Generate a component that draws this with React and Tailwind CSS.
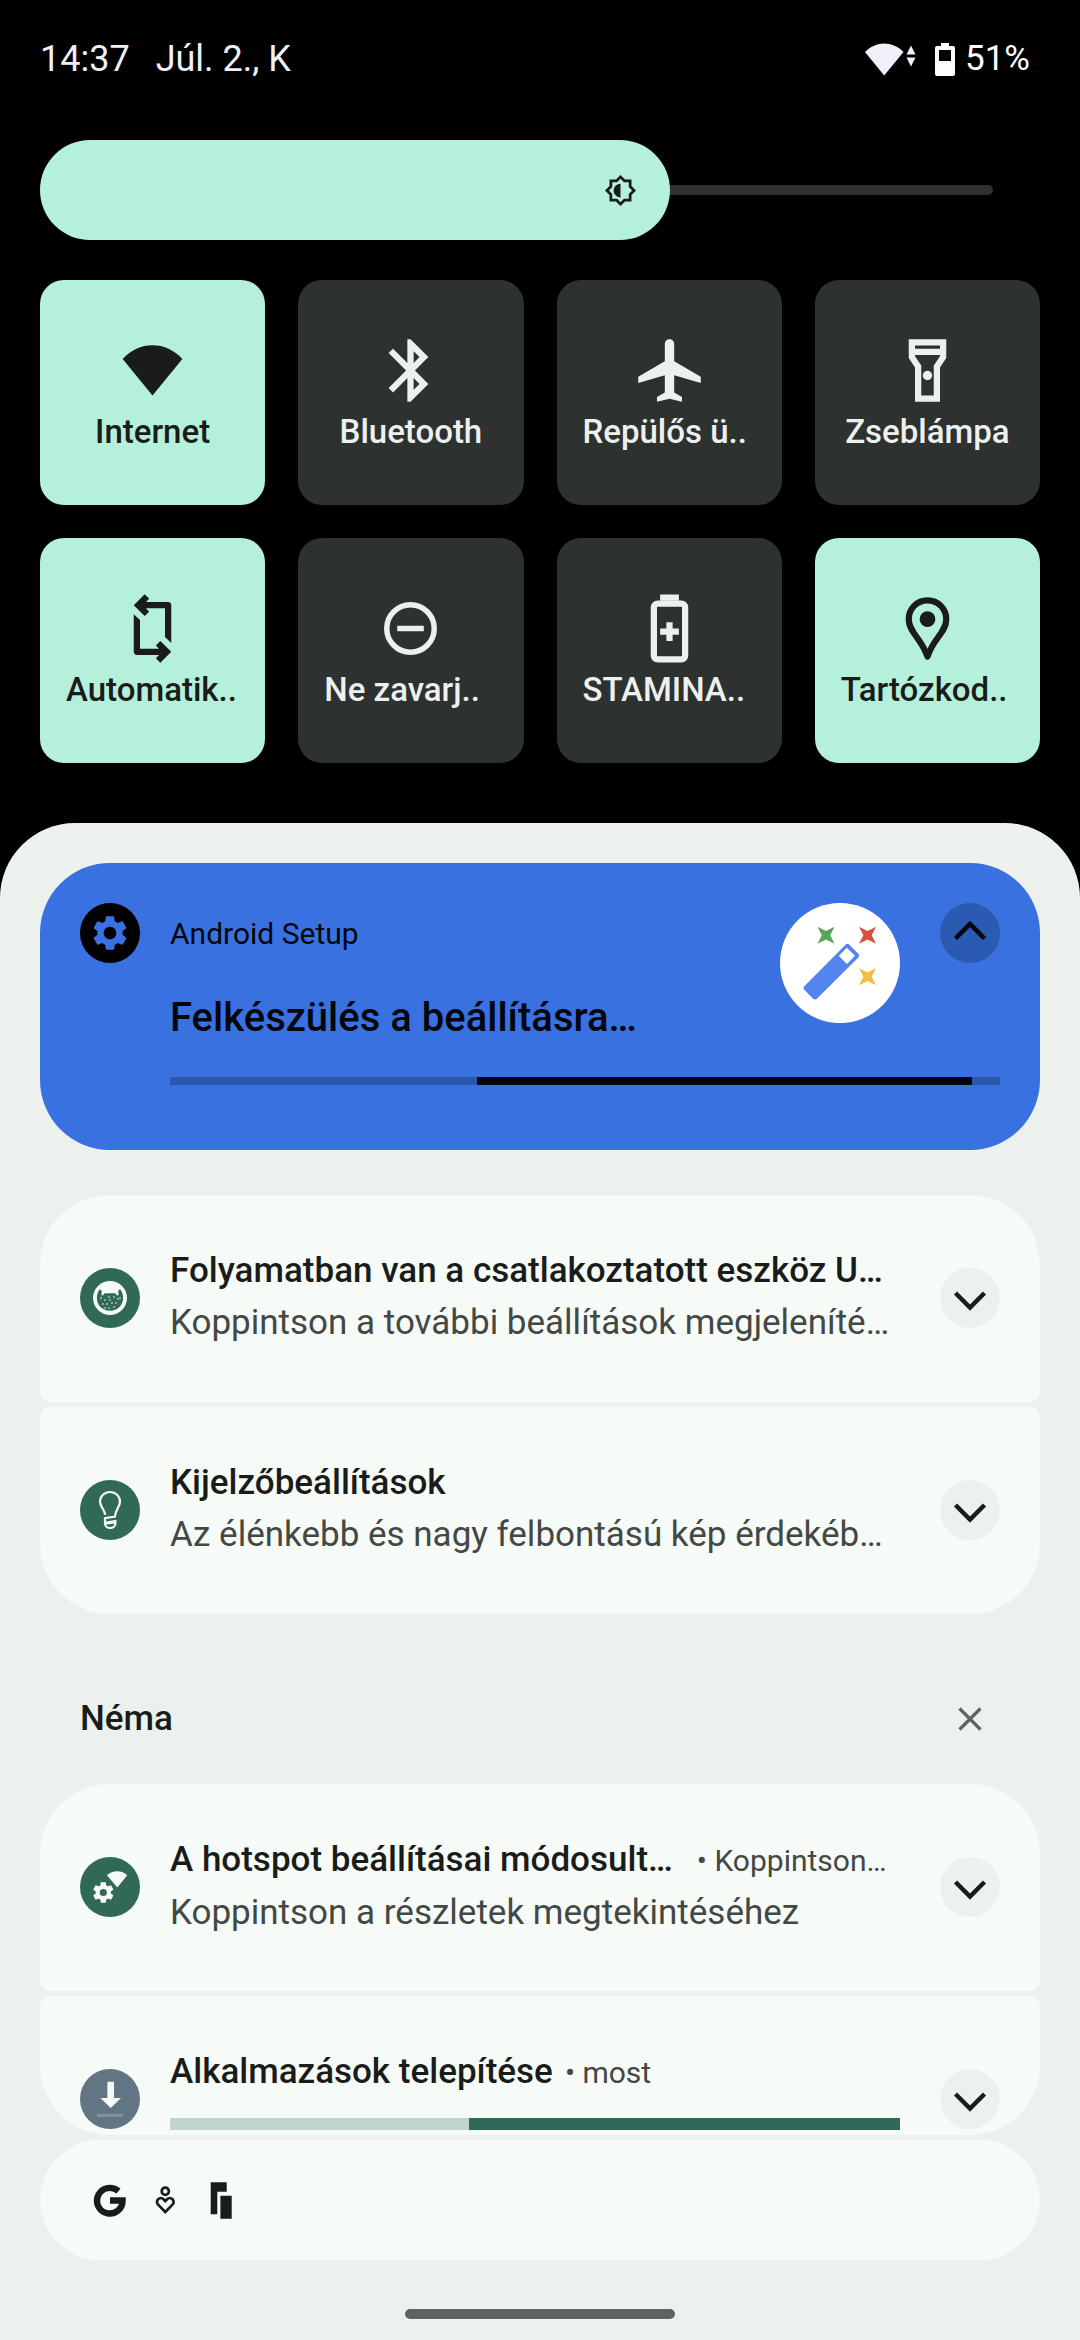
import { useState } from 'react';
import { MdSettings, MdBluetooth, MdAirplanemodeActive } from 'react-icons/md';
import clsx from 'clsx';

const WifiIcon = (props) => (
  <svg viewBox="0 0 24 24" fill="currentColor" {...props}>
    <path d="M12 20L2.45 8.3C5.1 5.4 8.4 3.9 12 3.9s6.9 1.5 9.55 4.4z" />
  </svg>
);

const FlashlightIcon = (props) => (
  <svg viewBox="0 0 24 24" fill="currentColor" {...props}>
    <path fillRule="evenodd" d="M18 2H6v6l2 3v11h8V11l2-3V2zM16 4v1H8V4h8zM14 10.4V20h-4v-9.6L8 7.4V7h8v.4l-2 3z" />
    <circle cx="12" cy="13.6" r="1.5" />
  </svg>
);

const RotateIcon = (props) => (
  <svg viewBox="0 0 24 24" fill="currentColor" {...props}>
    <path d="M6 4.55L9.5 1.05l1.45 1.45L9.9 3.55h7a1.1 1.1 0 0 1 1.1 1.1V16.6l-2-1.9V5.55H9.9l1.05 1.05L9.5 8z" />
    <path transform="rotate(180 12 12)" d="M6 4.55L9.5 1.05l1.45 1.45L9.9 3.55h7a1.1 1.1 0 0 1 1.1 1.1V16.6l-2-1.9V5.55H9.9l1.05 1.05L9.5 8z" />
  </svg>
);

const DndIcon = (props) => (
  <svg viewBox="0 0 24 24" fill="none" stroke="currentColor" strokeWidth="1.75" {...props}>
    <circle cx="12" cy="12" r="7.6" />
    <path d="M7.75 12h8.5" />
  </svg>
);

const StaminaIcon = (props) => (
  <svg viewBox="0 0 24 24" fill="none" stroke="currentColor" strokeWidth="2" {...props}>
    <rect x="7" y="4" width="10" height="17.9" rx="1.2" />
    <path d="M9 2.1h6M9 13h6M12 10v6" />
  </svg>
);

const LocationIcon = (props) => (
  <svg viewBox="0 0 24 24" fill="none" stroke="currentColor" strokeWidth="2" strokeLinejoin="round" {...props}>
    <path d="M12 3C8.6 3 6 5.7 6 9c0 2.2 1.1 3.8 2.6 5.8C10 16.7 11.2 18.6 12 21c.8-2.4 2-4.3 3.4-6.2C16.9 12.8 18 11.2 18 9c0-3.3-2.6-6-6-6z" />
    <circle cx="12" cy="9" r="2.5" fill="currentColor" stroke="none" />
  </svg>
);

const BrightnessIcon = (props) => (
  <svg viewBox="0 0 24 24" fill="currentColor" {...props}>
    <path
      fillRule="evenodd"
      d="M20 8.69V4h-4.69L12 .69 8.69 4H4v4.69L.69 12 4 15.31V20h4.69L12 23.31 15.31 20H20v-4.69L23.31 12 20 8.69zM18 14.48V18h-3.52L12 20.48 9.52 18H6v-3.52L3.52 12 6 9.52V6h3.52L12 3.52 14.48 6H18v3.52L20.48 12 18 14.48z"
    />
    <path d="M12 7v10c-2.76 0-5-2.24-5-5s2.24-5 5-5z" />
  </svg>
);

const BatteryIcon = (props) => (
  <svg viewBox="0 0 20 33" fill="currentColor" {...props}>
    <path fillRule="evenodd" d="M6 0h8v3h4a2 2 0 0 1 2 2v26a2 2 0 0 1-2 2H2a2 2 0 0 1-2-2V5a2 2 0 0 1 2-2h4zM4 7v11h12V7z" />
  </svg>
);

const Chevron = ({ up }) => (
  <svg viewBox="0 0 60 60" className="size-15" fill="none" stroke="currentColor" strokeWidth="4.5">
    <path d={up ? 'M15.5 35.5L30 21l14.5 14.5' : 'M15.5 25L30 39.5 44.5 25'} />
  </svg>
);

// Seed positions on the melon slice of the USB icon
const SEEDS = [[-9, 0], [-5, 2], [-1, -1], [4, -1], [8, 1], [-7, 6], [-3, 6], [2, 5], [6, 5], [10, 0], [-1, 10], [4, 9], [-5, 10], [0, 2]];

const MelonIcon = () => (
  <svg viewBox="-30 -30 60 60" className="size-15">
    <circle r="17" fill="#f6fbf8" />
    <path
      fill="#306957"
      d="M-10.5-8.3C-14-3.5-14 3-10.5 8-5.5 14.3 5.5 14.3 10.5 8 14 3 14-3.5 10.5-8.3 9-9 7.6-7.6 8.6-3.4 8 -2 6.5-2 6-4.4 2-5-2-5-6-4.4-6.5-2-8-2-8.6-3.4-7.6-7.6-9-9-10.5-8.3z"
    />
    {SEEDS.map(([x, y], i) => (
      <circle key={i} cx={x} cy={y} r="0.8" fill="#f6fbf8" />
    ))}
  </svg>
);

const BulbIcon = () => (
  <svg viewBox="-30 -30 60 60" className="size-15" fill="none" stroke="#f6fbf8" strokeWidth="2.2">
    <path d="M-4.8 4.8C-5.3-.5-10-3-10-8.4a10 9.6 0 0 1 20 0C10-3 5.3-.5 5 6.5L-5 8.2v4.6L5.4 11v2.2a5.2 4.8 0 0 1-10.4 0" />
    <path d="M-5 13.6L5 13" strokeWidth="1.6" />
  </svg>
);

const HotspotIcon = () => (
  <svg viewBox="-30 -30 60 60" className="size-15" fill="#f6fbf8">
    <path d="M7.3.4L-3-11.8C2.5-17 12-17 17.2-11.8z" />
    <g transform="translate(-6.7 5.5)">
      <circle r="5.6" fill="none" stroke="#f6fbf8" strokeWidth="4" />
      {[0, 60, 120].map((a) => (
        <path key={a} transform={`rotate(${a})`} d="M-2.4-10.3h4.8l.8 4h-6.4zM-2.4 10.3h4.8l.8-4h-6.4z" />
      ))}
    </g>
  </svg>
);

const DownloadIcon = () => (
  <svg viewBox="-30 -30 60 60" className="size-15" fill="#f6fbf8">
    <path d="M-2.6-17.3h6.6v16.3h7L.7 9-9.6-1h7z" />
    <path d="M-13 14.7h26V18h-26z" fill="#80919b" />
  </svg>
);

const STAR = 'M-8.5-8.5L0-4.2 8.5-8.5 4.2 0 8.5 8.5 0 4.2-8.5 8.5-4.2 0z';

const MagicWand = () => (
  <svg viewBox="0 0 120 120" className="size-30 shrink-0">
    <circle cx="60" cy="60" r="60" fill="#fff" />
    <path d={STAR} transform="translate(46 32.3)" fill="#57a55a" />
    <path d={STAR} transform="translate(87.5 32.3)" fill="#d8503f" />
    <path d={STAR} transform="translate(87.5 73.7)" fill="#f2bd42" />
    <path d="M67.4 44L76 52.6 35 93.4 26.7 85z" fill="#5484ed" stroke="#5484ed" strokeWidth="6" strokeLinejoin="round" />
    <path d="M66.9 44.7l8.1 8.1-8.1 8.1-8.1-8.1z" fill="#fff" />
  </svg>
);

const TILES = [
  { label: 'Internet', icon: WifiIcon, on: true },
  { label: 'Bluetooth', icon: MdBluetooth },
  { label: 'Repülős ü..', icon: MdAirplanemodeActive, cut: true },
  { label: 'Zseblámpa', icon: FlashlightIcon },
  { label: 'Automatik..', icon: RotateIcon, on: true, cut: true },
  { label: 'Ne zavarj..', icon: DndIcon, cut: true },
  { label: 'STAMINA..', icon: StaminaIcon, cut: true },
  { label: 'Tartózkod..', icon: LocationIcon, on: true, cut: true },
];

function Tile({ label, icon: Icon, on, cut }) {
  return (
    <button
      aria-pressed={!!on}
      className={clsx(
        'flex h-[225px] flex-col items-center justify-center gap-1 rounded-3xl px-[26px]',
        on ? 'bg-[#b5f0db] text-[#1a1c1a]' : 'bg-[#2d3230] text-[#edf1ee]'
      )}
    >
      <Icon className="size-[75px]" />
      <span className={clsx('w-full whitespace-nowrap text-[33px] leading-10 font-medium', cut ? 'text-left' : 'text-center')}>
        {label}
      </span>
    </button>
  );
}

function Notification({ icon, iconBg = 'bg-[#306957]', title, meta, metaGap = 'ml-3', body, className, children }) {
  return (
    <article className={clsx('flex items-start overflow-hidden bg-[#f6fbf8] px-10', className)}>
      <div className={clsx('mt-[73px] size-15 shrink-0 rounded-full', iconBg)}>{icon}</div>
      <div className="mt-[50px] ml-[30px] min-w-0 flex-1 whitespace-nowrap text-[35px] leading-[52px]">
        <div className="flex items-baseline">
          <h3 className="font-medium text-[#1a1c1a]">{title}</h3>
          {meta && <span className={clsx('text-[30px] text-[#434845]', metaGap)}>• {meta}</span>}
        </div>
        {body && <p className="text-[#434845]">{body}</p>}
        {children}
      </div>
      <button aria-label="Kibontás" className="mt-[73px] ml-10 size-15 shrink-0 rounded-full bg-[#ecf1ee] text-[#1a1c1a]">
        <Chevron />
      </button>
    </article>
  );
}

export default function App() {
  const [brightness, setBrightness] = useState(63);

  return (
    <div className="flex min-h-screen flex-col bg-black font-['Roboto',sans-serif]">
      <header className="flex h-[118px] items-center justify-between pr-[50px] pl-10 text-[#f1eff7]">
        <div className="flex gap-[26px] text-[36px]">
          <span>14:37</span>
          <span>Júl. 2., K</span>
        </div>
        <div className="flex items-center text-[35px]">
          <svg viewBox="0 0 52 33" className="h-[33px] w-[52px]" fill="currentColor">
            <path d="M19.2 32.5L0 9C11-2.5 27.5-2.5 38.5 9z" />
            <path d="M46 2.5l4.5 9h-9zM46 23.5l4.5-9h-9z" />
          </svg>
          <BatteryIcon className="ml-[18px] h-[33px] w-5 text-white" />
          <span className="ml-2.5 text-white">51%</span>
        </div>
      </header>

      <section className="relative mx-10 mt-[22px] flex h-25 items-center">
        <div
          className="flex h-full items-center justify-end rounded-full bg-[#b5f0db] pr-[33px] text-[#1a1c1a]"
          style={{ width: `${brightness}%` }}
        >
          <BrightnessIcon className="size-[33px]" />
        </div>
        <div className="mr-[47px] h-2.5 flex-1 rounded-r-full bg-[#2d3230]" />
        <input
          type="range"
          aria-label="Fényerő"
          value={brightness}
          onChange={(e) => setBrightness(Number(e.target.value))}
          className="absolute inset-0 size-full opacity-0"
        />
      </section>

      <section className="mx-10 mt-10 grid grid-cols-4 gap-[33px]">
        {TILES.map((t) => (
          <Tile key={t.label} {...t} />
        ))}
      </section>

      <main className="mt-[60px] flex flex-1 flex-col rounded-t-[75px] bg-[#ecf1ee] px-10 pt-10">
        <article className="flex h-[287px] flex-col rounded-[70px] bg-[#3971e1] px-10 pt-10 text-[#03060b]">
          <div className="flex items-start">
            <div className="flex size-15 shrink-0 items-center justify-center rounded-full bg-black text-[#3971e1]">
              <MdSettings size={42} />
            </div>
            <div className="ml-[30px] flex-1 whitespace-nowrap">
              <p className="text-[30px] leading-[62px]">Android Setup</p>
              <h2 className="mt-6 text-[40px] leading-[58px] font-medium">Felkészülés a beállításra…</h2>
            </div>
            <MagicWand />
            <button aria-label="Összecsukás" className="ml-10 size-15 shrink-0 rounded-full bg-[#2b5ab2]">
              <Chevron up />
            </button>
          </div>
          <div className="mt-[30px] ml-[90px] flex h-2 bg-[#2a58ac]">
            <div className="ml-[37%] w-[59.6%] bg-[#03060b]" />
          </div>
        </article>

        <section className="mt-[45px] flex flex-col gap-[5px]">
          <Notification
            className="h-[207px] rounded-t-[70px] rounded-b-[10px]"
            icon={<MelonIcon />}
            title="Folyamatban van a csatlakoztatott eszköz U…"
            body="Koppintson a további beállítások megjeleníté…"
          />
          <Notification
            className="h-[207px] rounded-t-[10px] rounded-b-[70px]"
            icon={<BulbIcon />}
            title="Kijelzőbeállítások"
            body="Az élénkebb és nagy felbontású kép érdekéb…"
          />
        </section>

        <div className="mt-10 flex h-[130px] items-center justify-between px-10">
          <h2 className="text-[35px] font-medium text-[#1a1c1a]">Néma</h2>
          <button aria-label="Némák törlése" className="size-15 text-[#5f6368]">
            <svg viewBox="0 0 60 60" className="size-15" fill="none" stroke="currentColor" strokeWidth="3.2">
              <path d="M19.5 19.5l21 21M40.5 19.5l-21 21" />
            </svg>
          </button>
        </div>

        <section className="flex flex-col gap-[5px]">
          <Notification
            className="h-[207px] rounded-t-[70px] rounded-b-[10px]"
            icon={<HotspotIcon />}
            title="A hotspot beállításai módosult…"
            meta="Koppintson…"
            metaGap="ml-6"
            body="Koppintson a részletek megtekintéséhez"
          />
          <Notification
            className="h-[139px] rounded-t-[10px] rounded-b-[70px]"
            icon={<DownloadIcon />}
            iconBg="bg-[#617682]"
            title="Alkalmazások telepítése"
            meta="most"
          >
            <div className="mt-[19px] flex h-3 justify-end bg-[#c1d5cd]">
              <div className="w-[59%] bg-[#306957]" />
            </div>
          </Notification>

          {/* shelf with the collapsed notifications */}
          <div className="flex h-30 items-center gap-[15px] rounded-full bg-[#f6fbf8] px-[50px] text-[#1a1c1a]">
            <svg viewBox="0 0 40 40" className="size-10" fill="none" stroke="currentColor" strokeWidth="6.4">
              <path d="M28.4 11.2A12.8 12.8 0 1 0 32.6 20.5H20" />
            </svg>
            <svg viewBox="0 0 40 40" className="size-10" fill="none" stroke="currentColor" strokeWidth="2.7">
              <circle cx="20.3" cy="11.3" r="3.6" />
              <path d="M20.3 32l-7.2-7.4a3.8 3.8 0 0 1 5.4-5.4l1.8 1.8 1.8-1.8a3.8 3.8 0 0 1 5.4 5.4z" />
            </svg>
            <svg viewBox="0 0 40 40" className="size-10" fill="currentColor">
              <path d="M10.7 2.3h16v9.4h-9.4v22.6h-6.6zM20.4 15.7h11.3v23H20.4z" />
            </svg>
          </div>
        </section>

        <div className="mx-auto mt-[49px] mb-[21px] h-2.5 w-[270px] rounded-full bg-[#5f625f]" />
      </main>
    </div>
  );
}
